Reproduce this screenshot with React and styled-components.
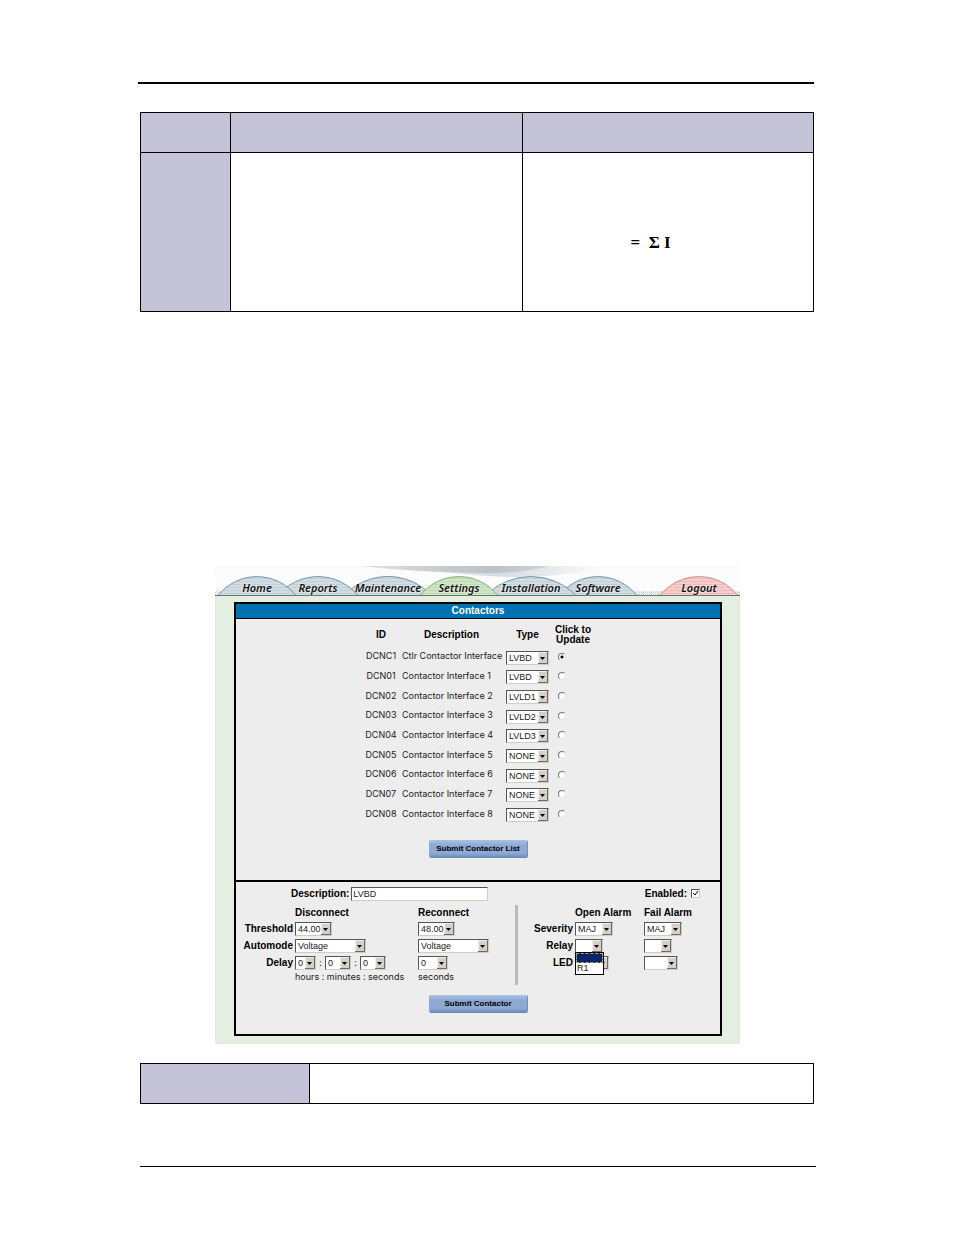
import React from "react";
import styled, { createGlobalStyle } from "styled-components";

const GlobalStyle = createGlobalStyle`
  body {
    margin: 0;
    background: #fff;
    color: #222;
    font-family: Inter, "Liberation Sans", sans-serif;
    font-size: 9px;
    line-height: 12px;
  }
`;

const Page = styled.main`
  padding: 82px 140px 68px;
`;

const HeaderRule = styled.hr`
  height: 2px;
  margin: 0 0 28px -2px;
  border: 0;
  background: #000;
`;

const FooterRule = styled.hr`
  height: 1px;
  margin: 62px -2px 0 0;
  border: 0;
  background: #000;
`;

const DocTable = styled.table`
  width: 100%;
  border-collapse: collapse;
  table-layout: fixed;
`;

const DocCell = styled.td`
  box-sizing: border-box;
  width: ${(p) => p.$width || "auto"};
  height: ${(p) => p.$height}px;
  padding: 0;
  border: 1px solid #000;
  background: ${(p) => (p.$shaded ? "#c4c3d8" : "#fff")};
`;

const FormulaCell = styled(DocCell)`
  padding: 80px 0 0 108px;
  vertical-align: top;
`;

const Formula = styled.p`
  margin: 0;
  color: #000;
  font: bold 17px/20px "Liberation Serif", serif;
  white-space: pre;
`;

const Screen = styled.section`
  margin: 254px 74px 19px 75px;
  padding-bottom: 8px;
  background: #e4efe1;
`;

const TabBar = styled.nav`
  position: relative;
  display: flex;
  align-items: flex-end;
  height: 29px;
  margin-bottom: 6px;
  padding: 0 2px 0 3px;
  border-bottom: 1px solid #69756f;
  background: linear-gradient(#f9fafa, #fff);
`;

const Backdrop = styled.svg`
  position: absolute;
  inset: 0;
  width: 100%;
  height: 100%;
`;

const TabLink = styled.a`
  position: relative;
  z-index: ${(p) => p.$level};
  flex: none;
  width: ${(p) => p.$width}px;
  height: 20px;
  margin-left: ${(p) => (p.$last ? "auto" : `${p.$shift}px`)};
  color: #111;
  font: italic 600 11px/26px "Noto Sans", sans-serif;
  text-align: center;
  text-decoration: none;
  text-shadow: 0 0 2px #fff;
`;

const TabShape = styled.svg`
  position: absolute;
  left: 0;
  top: 0;
  z-index: -1;
`;

const Panel = styled.div`
  margin: 0 18px 0 19px;
  border: 2px solid #000;
  background: #ededed;
`;

const PanelTitle = styled.h1`
  margin: 0;
  border-bottom: 1px solid #000;
  background: #0072b1;
  color: #fff;
  font: bold 10px/14px "Liberation Sans", sans-serif;
  text-align: center;
`;

const ListSection = styled.form`
  padding: 3px 0 22px;
  border-bottom: 2px solid #000;
`;

const ContactorTable = styled.table`
  width: 236px;
  height: 203px;
  margin: 0 auto 15px;
  border-collapse: collapse;
  table-layout: fixed;
`;

const Heading = styled.th`
  width: ${(p) => p.$width}px;
  height: 26px;
  padding: 0 ${(p) => p.$right || 0}px 0 0;
  color: #000;
  font: bold 10px/10px "Liberation Sans", sans-serif;
  white-space: nowrap;
`;

const Cell = styled.td`
  padding: 0;
  text-align: ${(p) => p.$align || "left"};
  white-space: nowrap;
`;

const TextCell = styled(Cell)`
  padding-bottom: 3px;
`;

const SelectFrame = styled.span`
  position: relative;
  display: inline-block;
  vertical-align: middle;
  width: ${(p) => p.$width}px;
  height: 14px;
`;

const SelectBox = styled.select`
  appearance: none;
  box-sizing: border-box;
  display: block;
  width: 100%;
  height: 14px;
  margin: 0;
  padding: 0 0 0 2px;
  border: 1px solid;
  border-color: #555 #d0cdc6 #d0cdc6 #555;
  border-radius: 0;
  background: #fff;
  color: #222;
  font: 9px/12px "Liberation Sans", sans-serif;
`;

const ArrowKey = styled.svg`
  position: absolute;
  right: 1px;
  top: 1px;
  pointer-events: none;
`;

const Radio = styled.input`
  appearance: none;
  box-sizing: border-box;
  display: block;
  width: 8px;
  height: 8px;
  margin: 0 0 2px 4px;
  border: 1px solid;
  border-color: #777 #e4e4e4 #e4e4e4 #777;
  border-radius: 50%;
  background: #fff;
  &:checked {
    background: radial-gradient(circle, #000 0 1px, #fff 2px);
  }
`;

const SubmitButton = styled.button`
  display: block;
  width: 99px;
  height: 18px;
  margin: 0 auto;
  padding: 0 0 1px;
  border: 1px solid;
  border-color: #a7bfe0 #6f8fc0 #6a88b5 #8fabd4;
  border-radius: 2px;
  background: linear-gradient(#a5bde0, #8ba8d3 30%, #8fabd5 75%, #7090c2);
  color: #000;
  font: bold 8px/12px "Liberation Sans", sans-serif;
  white-space: nowrap;
`;

const DetailSection = styled.form`
  padding: 3px 0 21px;
`;

const TopRow = styled.div`
  display: flex;
  align-items: center;
  justify-content: space-between;
  height: 17px;
  margin-bottom: 3px;
  padding: 0 20px 0 55px;
`;

const Field = styled.label`
  display: flex;
  align-items: center;
  gap: ${(p) => p.$gap}px;
  color: #000;
  font: bold 10px/12px "Liberation Sans", sans-serif;
`;

const TextInput = styled.input`
  box-sizing: border-box;
  width: 137px;
  height: 14px;
  margin: 0;
  padding: 0 1px;
  border: 1px solid;
  border-color: #555 #d0cdc6 #d0cdc6 #555;
  border-radius: 0;
  background: #fff;
  color: #222;
  font: 9px/12px "Liberation Sans", sans-serif;
`;

const CheckFrame = styled.span`
  display: grid;
  width: 9px;
  height: 9px;
  & > * {
    grid-area: 1 / 1;
  }
`;

const CheckInput = styled.input`
  appearance: none;
  box-sizing: border-box;
  width: 9px;
  height: 9px;
  margin: 0;
  border: 1px solid;
  border-color: #555 #d0cdc6 #d0cdc6 #555;
  background: #fff;
  &:not(:checked) + svg {
    visibility: hidden;
  }
`;

const Columns = styled.div`
  display: flex;
  margin-bottom: 12px;
`;

const FieldGrid = styled.div`
  display: grid;
  grid-template-columns: ${(p) => p.$columns};
  grid-template-rows: 15px 17px 17px 17px 12px;
  align-items: center;
`;

const Separator = styled.div`
  flex: none;
  width: 3px;
  margin-bottom: -2px;
  background: #bbb;
`;

const ColumnLabel = styled.span`
  color: #000;
  font: bold 10px/12px "Liberation Sans", sans-serif;
  white-space: nowrap;
`;

const RowLabel = styled(ColumnLabel)`
  padding-right: 2px;
  text-align: right;
`;

const Slot = styled.div`
  position: relative;
  display: flex;
  align-items: center;
  white-space: nowrap;
`;

const Colon = styled.span`
  width: ${(p) => p.$width}px;
  text-align: center;
`;

const OptionMenu = styled.ul`
  position: absolute;
  left: 0;
  top: 13px;
  z-index: 2;
  box-sizing: border-box;
  width: 29px;
  margin: 0;
  padding: 0;
  border: 1px solid #000;
  background: #fff;
  font-family: "Liberation Sans", sans-serif;
  list-style: none;
`;

const OptionItem = styled.li`
  box-sizing: border-box;
  height: ${(p) => (p.$active ? 10 : 11)}px;
  padding-left: 1px;
  outline: ${(p) => (p.$active ? "1px dashed #b9a25c" : "none")};
  outline-offset: -1px;
  background: ${(p) => (p.$active ? "#0a246a" : "#fff")};
  color: #222;
  line-height: 11px;
`;

function Dropdown({ label, width, value }) {
  return (
    <SelectFrame $width={width}>
      <SelectBox aria-label={label} defaultValue={value}>
        <option value={value}>{value}</option>
      </SelectBox>
      <ArrowKey width="10" height="12" viewBox="0 0 10 12" aria-hidden="true">
        <rect width="10" height="12" fill="#d4d0c8" />
        <path d="M.5 12V.5H10" fill="none" stroke="#f1efea" />
        <path d="M0 11.5H9.5V0" fill="none" stroke="#6d6a65" />
        <path d="M2 5h5L4.5 8z" fill="#000" />
      </ArrowKey>
    </SelectFrame>
  );
}

const BLUE = { id: "blue", edge: "#7595a6", fill: "#d2dde3", stripe: "#c1cfd8" };
const GREEN = { id: "green", edge: "#84b07b", fill: "#cfe6c6", stripe: "#bedbb2" };
const RED = { id: "red", edge: "#d48b8b", fill: "#f5cdcd", stripe: "#efbaba" };

const tabs = [
  { name: "Home", width: 78, shift: 0, level: 3, tone: BLUE },
  { name: "Reports", width: 80, shift: -18, level: 2, tone: BLUE },
  { name: "Maintenance", width: 88, shift: -14, level: 1, tone: BLUE },
  { name: "Settings", width: 78, shift: -12, level: 4, tone: GREEN },
  { name: "Installation", width: 90, shift: -12, level: 3, tone: BLUE },
  { name: "Software", width: 78, shift: -17, level: 2, tone: BLUE },
  { name: "Logout", width: 78, last: true, level: 1, tone: RED },
];

function Tab({ name, width, shift, level, last, tone }) {
  const half = width / 2;
  const radius = (half * half + 19 * 19) / 38;
  const arc = `M.5 20A${radius} ${radius} 0 0 1 ${width - 0.5} 20`;
  return (
    <TabLink href="#" $width={width} $shift={shift} $level={level} $last={last}>
      <TabShape width={width} height="20" aria-hidden="true">
        <defs>
          <pattern id={`${tone.id}-lines`} width="4" height="3" patternUnits="userSpaceOnUse">
            <rect width="4" height="3" fill={tone.fill} />
            <rect width="4" height="1" fill={tone.stripe} />
          </pattern>
        </defs>
        <path d={arc} fill={`url(#${tone.id}-lines)`} stroke={tone.edge} />
      </TabShape>
      {name}
    </TabLink>
  );
}

const contactors = [
  ["DCNC1", "Ctlr Contactor Interface", "LVBD"],
  ["DCN01", "Contactor Interface 1", "LVBD"],
  ["DCN02", "Contactor Interface 2", "LVLD1"],
  ["DCN03", "Contactor Interface 3", "LVLD2"],
  ["DCN04", "Contactor Interface 4", "LVLD3"],
  ["DCN05", "Contactor Interface 5", "NONE"],
  ["DCN06", "Contactor Interface 6", "NONE"],
  ["DCN07", "Contactor Interface 7", "NONE"],
  ["DCN08", "Contactor Interface 8", "NONE"],
];

export default function App() {
  const stay = (event) => event.preventDefault();
  return (
    <>
      <GlobalStyle />
      <Page>
        <HeaderRule />
        <DocTable>
          <tbody>
            <tr>
              <DocCell $shaded $width="90px" $height={40} />
              <DocCell $shaded $height={40} />
              <DocCell $shaded $height={40} />
            </tr>
            <tr>
              <DocCell $shaded $height={159} />
              <DocCell $height={159} />
              <FormulaCell $height={159}>
                <Formula>{"=  Σ I"}</Formula>
              </FormulaCell>
            </tr>
          </tbody>
        </DocTable>

        <Screen>
          <TabBar>
            <Backdrop viewBox="0 0 525 29" preserveAspectRatio="none" aria-hidden="true">
              <defs>
                <linearGradient id="swoosh">
                  <stop offset="0" stopColor="#dfe3e5" />
                  <stop offset="0.4" stopColor="#c9cdd0" />
                  <stop offset="0.7" stopColor="#bdc1c5" />
                  <stop offset="1" stopColor="#d3d6d9" />
                </linearGradient>
                <linearGradient id="halo">
                  <stop offset="0" stopColor="#eceff0" />
                  <stop offset="0.45" stopColor="#d5dade" />
                  <stop offset="1" stopColor="#fff" />
                </linearGradient>
                <pattern id="grain" width="2" height="2" patternUnits="userSpaceOnUse">
                  <rect width="1" height="1" fill="#bfc6c9" />
                  <rect x="1" y="1" width="1" height="1" fill="#d3d8da" />
                </pattern>
              </defs>
              <path d="M185 0H400Q360 10 300 11Q250 10 185 0z" fill="url(#halo)" />
              <path d="M145 0H335Q305 8 262 7Q200 6 145 0z" fill="url(#swoosh)" />
              <rect y="25" width="525" height="4" fill="url(#grain)" />
            </Backdrop>
            {tabs.map((tab) => (
              <Tab key={tab.name} {...tab} />
            ))}
          </TabBar>

          <Panel>
            <PanelTitle>Contactors</PanelTitle>
            <ListSection onSubmit={stay}>
              <ContactorTable>
                <thead>
                  <tr>
                    <Heading $width={42}>ID</Heading>
                    <Heading $width={99}>Description</Heading>
                    <Heading $width={53}>Type</Heading>
                    <Heading $width={38} $right={4}>
                      Click to
                      <br />
                      Update
                    </Heading>
                  </tr>
                </thead>
                <tbody>
                  {contactors.map(([id, name, type], index) => (
                    <tr key={id}>
                      <TextCell $align="center">{id}</TextCell>
                      <TextCell>{name}</TextCell>
                      <Cell $align="center">
                        <Dropdown label={`${id} type`} width={43} value={type} />
                      </Cell>
                      <Cell>
                        <Radio
                          type="radio"
                          name="contactor"
                          aria-label={`Update ${id}`}
                          defaultChecked={index === 0}
                        />
                      </Cell>
                    </tr>
                  ))}
                </tbody>
              </ContactorTable>
              <SubmitButton type="submit">Submit Contactor List</SubmitButton>
            </ListSection>

            <DetailSection onSubmit={stay}>
              <TopRow>
                <Field $gap={2}>
                  Description:
                  <TextInput type="text" defaultValue="LVBD" />
                </Field>
                <Field $gap={4}>
                  Enabled:
                  <CheckFrame>
                    <CheckInput type="checkbox" defaultChecked />
                    <svg width="9" height="9" viewBox="0 0 9 9" aria-hidden="true">
                      <path d="M2 4l2 2 3-4" fill="none" stroke="#000" />
                    </svg>
                  </CheckFrame>
                </Field>
              </TopRow>

              <Columns>
                <FieldGrid $columns="59px 123px 97px">
                  <span />
                  <ColumnLabel>Disconnect</ColumnLabel>
                  <ColumnLabel>Reconnect</ColumnLabel>

                  <RowLabel>Threshold</RowLabel>
                  <Slot>
                    <Dropdown label="Disconnect threshold" width={37} value="44.00" />
                  </Slot>
                  <Slot>
                    <Dropdown label="Reconnect threshold" width={37} value="48.00" />
                  </Slot>

                  <RowLabel>Automode</RowLabel>
                  <Slot>
                    <Dropdown label="Disconnect automode" width={71} value="Voltage" />
                  </Slot>
                  <Slot>
                    <Dropdown label="Reconnect automode" width={71} value="Voltage" />
                  </Slot>

                  <RowLabel>Delay</RowLabel>
                  <Slot>
                    <Dropdown label="Disconnect delay hours" width={21} value="0" />
                    <Colon $width={9}>:</Colon>
                    <Dropdown label="Disconnect delay minutes" width={26} value="0" />
                    <Colon $width={9}>:</Colon>
                    <Dropdown label="Disconnect delay seconds" width={26} value="0" />
                  </Slot>
                  <Slot>
                    <Dropdown label="Reconnect delay seconds" width={30} value="0" />
                  </Slot>

                  <span />
                  <Slot>hours : minutes : seconds</Slot>
                  <Slot>seconds</Slot>
                </FieldGrid>
                <Separator />
                <FieldGrid $columns="57px 69px 69px">
                  <span />
                  <ColumnLabel>Open Alarm</ColumnLabel>
                  <ColumnLabel>Fail Alarm</ColumnLabel>

                  <RowLabel>Severity</RowLabel>
                  <Slot>
                    <Dropdown label="Open alarm severity" width={38} value="MAJ" />
                  </Slot>
                  <Slot>
                    <Dropdown label="Fail alarm severity" width={38} value="MAJ" />
                  </Slot>

                  <RowLabel>Relay</RowLabel>
                  <Slot>
                    <Dropdown label="Open alarm relay" width={28} value="" />
                    <OptionMenu aria-label="Relay choices">
                      <OptionItem $active />
                      <OptionItem>R1</OptionItem>
                    </OptionMenu>
                  </Slot>
                  <Slot>
                    <Dropdown label="Fail alarm relay" width={28} value="" />
                  </Slot>

                  <RowLabel>LED</RowLabel>
                  <Slot>
                    <Dropdown label="Open alarm LED" width={34} value="" />
                  </Slot>
                  <Slot>
                    <Dropdown label="Fail alarm LED" width={34} value="" />
                  </Slot>
                </FieldGrid>
              </Columns>
              <SubmitButton type="submit">Submit Contactor</SubmitButton>
            </DetailSection>
          </Panel>
        </Screen>

        <DocTable>
          <tbody>
            <tr>
              <DocCell $shaded $width="169px" $height={40} />
              <DocCell $height={40} />
            </tr>
          </tbody>
        </DocTable>
        <FooterRule />
      </Page>
    </>
  );
}
